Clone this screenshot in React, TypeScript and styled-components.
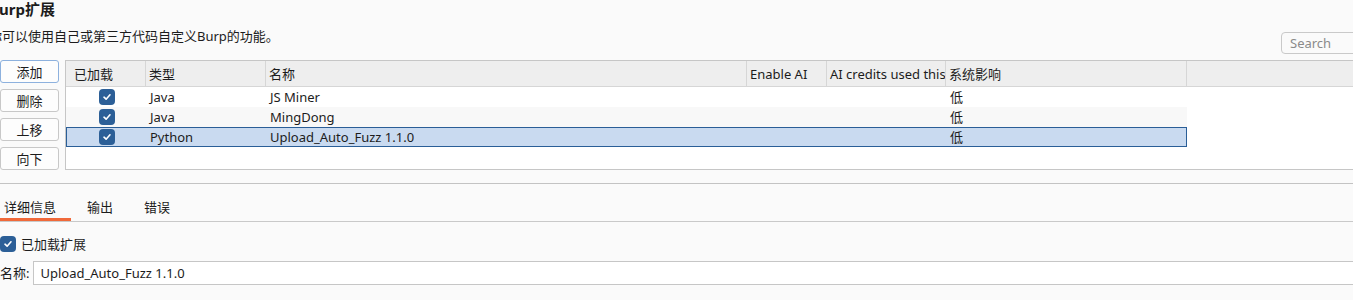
import React from "react";
import styled, { createGlobalStyle } from "styled-components";

const Global = createGlobalStyle`
  html, body { margin: 0; padding: 0; background: #fafafa; overflow: hidden; }
  body {
    font-family: "Noto Sans", "Noto Sans CJK SC", sans-serif;
    font-size: 13px;
    color: #1c1c1c;
  }
  * { box-sizing: border-box; }
`;

const Page = styled.div`
  width: 1353px;
  height: 300px;
  overflow: hidden;
  display: flex;
  flex-direction: column;
`;

const Title = styled.div`
  height: 20px;
  margin-left: -11px;
  font-weight: bold;
  font-size: 15px;
  line-height: 19px;
  white-space: nowrap;
`;

const InfoRow = styled.div`
  height: 40px;
  display: flex;
  justify-content: space-between;
  align-items: flex-start;
`;

const Description = styled.div`
  margin-left: -11px;
  margin-top: 7px;
  line-height: 18px;
  white-space: nowrap;
`;

const SearchBox = styled.div`
  margin-top: 12px;
  margin-right: -12px;
  width: 84px;
  height: 22px;
  border: 1px solid #c9c9c9;
  border-radius: 4px;
  background: #fafafa;
  color: #8a8a8a;
  padding-left: 8px;
  line-height: 20px;
`;

const Main = styled.div`
  display: flex;
  gap: 6px;
  height: 110px;
`;

const ButtonCol = styled.div`
  display: flex;
  flex-direction: column;
  gap: 6px;
  width: 59px;
  flex-shrink: 0;
`;

const ActionButton = styled.div<{ $focused?: boolean }>`
  height: 23px;
  border: 1px solid ${(p) => (p.$focused ? "#8db1de" : "#c8c8c8")};
  border-radius: 3px;
  background: #fdfdfd;
  display: flex;
  align-items: center;
  justify-content: center;
  line-height: 18px;
`;

const Table = styled.div`
  flex: 1;
  margin-right: -4px;
  border: 1px solid #c6c6c6;
  background: #ffffff;
  overflow: hidden;
`;

const cols = "80px 120px 481px 80px 119px 241px";

const HeaderRow = styled.div`
  display: grid;
  grid-template-columns: ${cols} 1fr;
  height: 26px;
  background: #eeeeee;
  border-bottom: 1px solid #d6d6d6;
`;

const HeaderCell = styled.div<{ $pad?: number }>`
  padding-left: ${(p) => p.$pad ?? 3}px;
  border-right: 1px solid #d6d6d6;
  display: flex;
  align-items: center;
  white-space: nowrap;
  overflow: hidden;
  line-height: 18px;
`;

const Row = styled.div<{ $alt?: boolean; $selected?: boolean }>`
  display: grid;
  grid-template-columns: ${cols};
  width: 1121px;
  height: 20px;
  background: ${(p) => (p.$selected ? "#c9daf0" : p.$alt ? "#f8f8f8" : "#ffffff")};
  border: ${(p) => (p.$selected ? "1px solid #2a5e97" : "1px solid transparent")};
`;

const Cell = styled.div<{ $center?: boolean }>`
  padding-left: ${(p) => (p.$center ? 0 : 3)}px;
  display: flex;
  align-items: center;
  justify-content: ${(p) => (p.$center ? "center" : "flex-start")};
  white-space: nowrap;
  overflow: hidden;
  line-height: 18px;
`;

const CheckBoxBox = styled.span`
  width: 16px;
  height: 16px;
  border-radius: 4px;
  background: #2c5f97;
  display: inline-flex;
  align-items: center;
  justify-content: center;
  flex-shrink: 0;
`;

const CheckMark = () => (
  <CheckBoxBox>
    <svg width="10" height="10" viewBox="0 0 10 10">
      <path d="M2 5.2 L4.1 7.2 L8 2.8" fill="none" stroke="#ffffff" strokeWidth="1.6" strokeLinecap="round" strokeLinejoin="round" />
    </svg>
  </CheckBoxBox>
);

const Separator = styled.div`
  margin-top: 13px;
  border-top: 1px solid #c3c3c3;
`;

const TabBar = styled.div`
  height: 38px;
  display: flex;
  gap: 1px;
  align-items: stretch;
  padding-top: 11px;
  border-bottom: 1px solid #c9c9c9;
  margin-left: -11px;
`;

const Tab = styled.div<{ $active?: boolean }>`
  padding: 1px 15px 0;
  display: flex;
  align-items: center;
  border-bottom: 3px solid ${(p) => (p.$active ? "#f0693a" : "transparent")};
  line-height: 18px;
`;

const Details = styled.div`
  padding-top: 14px;
  display: flex;
  flex-direction: column;
  gap: 9px;
`;

const CheckRow = styled.div`
  display: flex;
  align-items: center;
  gap: 5px;
  height: 16px;
  line-height: 18px;
`;

const NameRow = styled.div`
  display: flex;
  align-items: center;
  gap: 4px;
`;

const NameLabel = styled.span`
  line-height: 18px;
  white-space: nowrap;
`;

const NameInput = styled.div`
  flex: 1;
  margin-right: -4px;
  height: 24px;
  border: 1px solid #c6c6c6;
  background: #ffffff;
  padding-left: 6px;
  display: flex;
  align-items: center;
  line-height: 18px;
`;

const extensions = [
  { type: "Java", name: "JS Miner", impact: "低" },
  { type: "Java", name: "MingDong", impact: "低" },
  { type: "Python", name: "Upload_Auto_Fuzz 1.1.0", impact: "低" },
];

export default function App() {
  return (
    <>
      <Global />
      <Page>
        <Title>Burp扩展</Title>
        <InfoRow>
          <Description>你可以使用自己或第三方代码自定义Burp的功能。</Description>
          <SearchBox>Search</SearchBox>
        </InfoRow>
        <Main>
          <ButtonCol>
            <ActionButton $focused>添加</ActionButton>
            <ActionButton>删除</ActionButton>
            <ActionButton>上移</ActionButton>
            <ActionButton>向下</ActionButton>
          </ButtonCol>
          <Table>
            <HeaderRow>
              <HeaderCell $pad={8}>已加载</HeaderCell>
              <HeaderCell>类型</HeaderCell>
              <HeaderCell>名称</HeaderCell>
              <HeaderCell>Enable AI</HeaderCell>
              <HeaderCell>AI credits used this</HeaderCell>
              <HeaderCell>系统影响</HeaderCell>
              <HeaderCell />
            </HeaderRow>
            {extensions.map((e, i) => (
              <Row key={e.name} $alt={i === 1} $selected={i === 2}>
                <Cell $center>
                  <CheckMark />
                </Cell>
                <Cell>{e.type}</Cell>
                <Cell>{e.name}</Cell>
                <Cell />
                <Cell />
                <Cell>{e.impact}</Cell>
              </Row>
            ))}
          </Table>
        </Main>
        <Separator />
        <TabBar>
          <Tab $active>详细信息</Tab>
          <Tab>输出</Tab>
          <Tab>错误</Tab>
        </TabBar>
        <Details>
          <CheckRow>
            <CheckMark />
            <span>已加载扩展</span>
          </CheckRow>
          <NameRow>
            <NameLabel>名称:</NameLabel>
            <NameInput>Upload_Auto_Fuzz 1.1.0</NameInput>
          </NameRow>
        </Details>
      </Page>
    </>
  );
}
